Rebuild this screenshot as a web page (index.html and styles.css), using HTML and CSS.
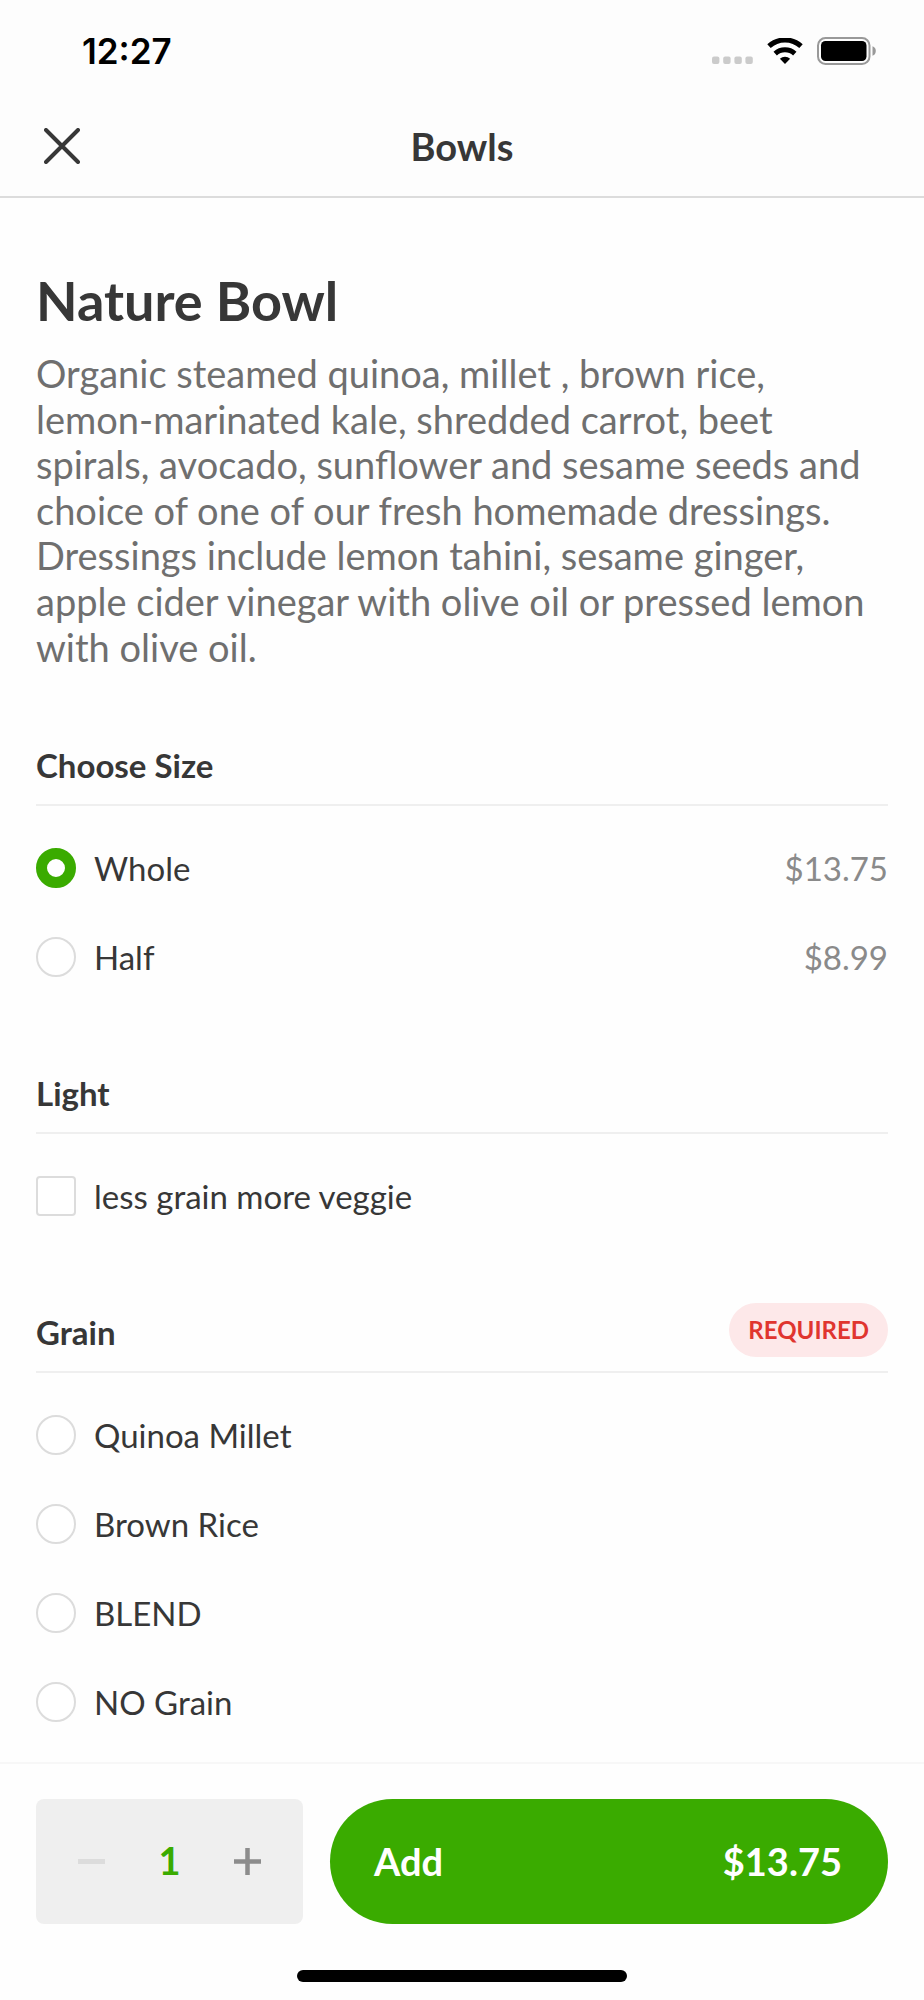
FILE: index.html
```html
<!DOCTYPE html>
<html lang="en">
<head>
    <meta charset="UTF-8">
    <meta name="viewport" content="width=device-width, initial-scale=1.0">
    <title>Bowls</title>
    <link rel="stylesheet" href="styles.css">
</head>
<body>
    <header class="header">
        <div class="status-bar">
            <span class="time">12:27</span>
            <div class="status-icons">
                <svg width="41" height="26" viewBox="0 0 41 26" fill="#cbcbcb">
                    <rect x="0" y="18.5" width="7.4" height="7.4" rx="2"/>
                    <rect x="11.2" y="18.5" width="7.4" height="7.4" rx="2"/>
                    <rect x="22.4" y="18.5" width="7.4" height="7.4" rx="2"/>
                    <rect x="33.4" y="18.5" width="7.4" height="7.4" rx="2"/>
                </svg>
                <svg width="36" height="26" viewBox="0 0 36 26" fill="none" stroke="#000">
                    <path d="M2 8.2A23.5 23.5 0 0 1 34 8.2" stroke-width="5"/>
                    <path d="M8.2 15.6A14.5 14.5 0 0 1 27.8 15.6" stroke-width="5"/>
                    <path d="M18 26L12.9 20.8A7.4 7.4 0 0 1 23.1 20.8Z" fill="#000" stroke="none"/>
                </svg>
                <svg width="59" height="28" viewBox="0 0 59 28">
                    <rect x="1" y="1" width="51.5" height="26" rx="7.5" fill="none" stroke="#999" stroke-width="2"/>
                    <rect x="4" y="4" width="45.5" height="20" rx="4.5" fill="#000"/>
                    <path d="M55.5 9.3a5 5 0 0 1 0 9.4z" fill="#999"/>
                </svg>
            </div>
        </div>
        <nav class="nav-bar">
            <button type="button" class="close" aria-label="Close">
                <svg width="36" height="36" viewBox="0 0 36 36" stroke="#373737" stroke-width="4" stroke-linecap="round">
                    <path d="M2 2L34 34M34 2L2 34"/>
                </svg>
            </button>
            <span class="nav-title">Bowls</span>
        </nav>
    </header>

    <main class="content">
        <h1>Nature Bowl</h1>
        <p class="description">Organic steamed quinoa, millet , brown rice, lemon-marinated kale, shredded carrot, beet spirals, avocado, sunflower and sesame seeds and choice of one of our fresh homemade dressings. Dressings include lemon tahini, sesame ginger, apple cider vinegar with olive oil or pressed lemon with olive oil.</p>

        <section class="group">
            <div class="group-head">
                <h2>Choose Size</h2>
            </div>
            <div class="options">
                <label class="option"><input type="radio" name="size" checked><span>Whole</span><span class="price">$13.75</span></label>
                <label class="option"><input type="radio" name="size"><span>Half</span><span class="price">$8.99</span></label>
            </div>
        </section>

        <section class="group">
            <div class="group-head">
                <h2>Light</h2>
            </div>
            <div class="options">
                <label class="option"><input type="checkbox" name="light"><span>less grain more veggie</span></label>
            </div>
        </section>

        <section class="group">
            <div class="group-head">
                <h2>Grain</h2>
                <span class="badge">REQUIRED</span>
            </div>
            <div class="options">
                <label class="option"><input type="radio" name="grain"><span>Quinoa Millet</span></label>
                <label class="option"><input type="radio" name="grain"><span>Brown Rice</span></label>
                <label class="option"><input type="radio" name="grain"><span>BLEND</span></label>
                <label class="option"><input type="radio" name="grain"><span>NO Grain</span></label>
            </div>
        </section>
    </main>

    <footer class="footer">
        <div class="actions">
            <div class="stepper">
                <button type="button" aria-label="Decrease quantity" disabled>
                    <svg width="27" height="27" viewBox="0 0 27 27" stroke="#dcdcdc" stroke-width="5"><path d="M0 13.5H27"/></svg>
                </button>
                <span class="quantity">1</span>
                <button type="button" aria-label="Increase quantity">
                    <svg width="27" height="27" viewBox="0 0 27 27" stroke="#8c8c8c" stroke-width="4.5"><path d="M0 13.5H27M13.5 0V27"/></svg>
                </button>
            </div>
            <button type="button" class="add"><span>Add</span><span>$13.75</span></button>
        </div>
        <div class="home-indicator"></div>
    </footer>
</body>
</html>
```

FILE: styles.css
```css
* { box-sizing: border-box; }
body { display: flex; flex-direction: column; min-height: 100vh; margin: 0; font-family: Lato, sans-serif; font-size: 33px; line-height: 40px; color: #373737; background: #fefefe; }
h1, h2, p { margin: 0; }
button { padding: 0; border: 0; background: none; font-family: inherit; color: inherit; cursor: pointer; }
button:disabled { cursor: default; }
svg { display: block; }

.header { background: #fdfdfd; border-bottom: 2px solid #dcdcdc; }
.status-bar { display: flex; justify-content: space-between; align-items: center; padding: 31px 48px 24px 82px; }
.time { font-family: Inter, sans-serif; font-size: 35px; font-weight: 600; color: #000; }
.status-icons { display: flex; align-items: center; gap: 14px; }
.nav-bar { display: grid; grid-template-columns: 1fr auto 1fr; align-items: center; height: 101px; padding: 0 44px; }
.close { justify-self: start; }
.nav-title { font-size: 38px; line-height: 46px; font-weight: bold; }

.content { flex: 1; padding: 71px 36px 39px; }
h1 { font-size: 54px; line-height: 64px; }
.description { margin-top: 18px; font-size: 38px; line-height: 1.2; color: #6f6f6f; }

.group { margin-top: 87px; }
.description + .group { margin-top: 66px; }
.group-head { display: flex; justify-content: space-between; align-items: center; min-height: 70px; padding-bottom: 14px; border-bottom: 2px solid #efefef; }
h2 { padding-top: 4px; font-size: 33px; line-height: 40px; }
.badge { padding: 7px 19px; border-radius: 27px; font-size: 24px; line-height: 40px; font-weight: bold; color: #e0352f; background: #fde8e9; }

.options { display: flex; flex-direction: column; gap: 49px; padding-top: 42px; }
.option { display: flex; align-items: center; cursor: pointer; }
.option input { appearance: none; flex: none; width: 40px; height: 40px; margin: 0 18px 0 0; border: 2px solid #dcdcdc; background: #fff; }
.option input[type="radio"] { border-radius: 50%; }
.option input[type="checkbox"] { border-radius: 4px; }
.option input[type="radio"]:checked { border: 11px solid #3aab00; }
.option input[type="checkbox"]:checked { background: #3aab00; }
.price { margin-left: auto; color: #8a8a8a; }

.footer { position: sticky; bottom: 0; padding: 35px 36px 18px; border-top: 2px solid #f7f7f7; background: #fefefe; }
.actions { display: flex; gap: 27px; height: 125px; font-size: 38px; line-height: 46px; font-weight: bold; }
.stepper { display: flex; justify-content: space-between; align-items: center; width: 267px; padding: 0 42px; border-radius: 8px; background: #efefef; }
.quantity { padding-bottom: 4px; color: #3aab00; }
.add { flex: 1; display: flex; justify-content: space-between; align-items: center; padding: 0 46px 2px 44px; border-radius: 63px; font-size: 38px; line-height: 46px; font-weight: bold; color: #fff; background: #3aab00; }
.home-indicator { width: 330px; height: 12px; margin: 46px auto 0; border-radius: 6px; background: #000; }
```
